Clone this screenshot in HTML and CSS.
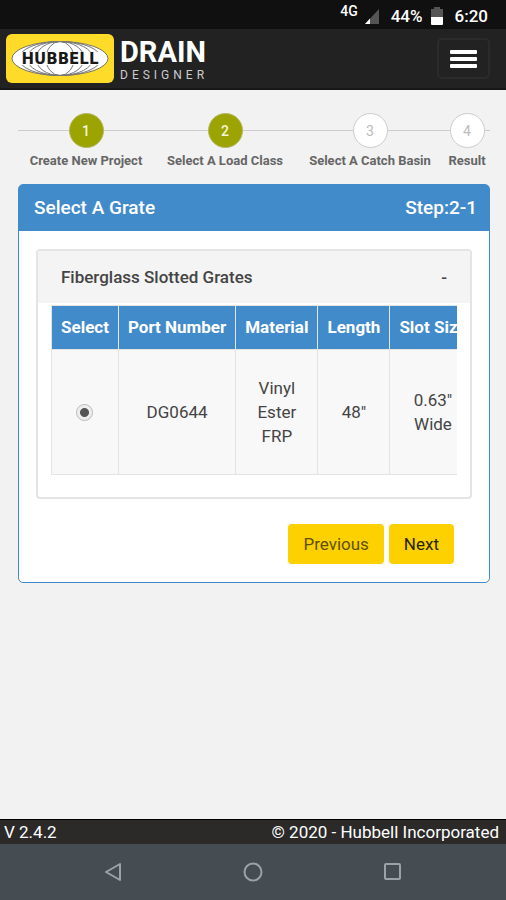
FILE: index.html
```html
<!DOCTYPE html>
<html lang="en">
<head>
<meta charset="utf-8">
<meta name="viewport" content="width=device-width, initial-scale=1">
<title>Hubbell Drain Designer</title>
<link rel="stylesheet" href="styles.css">
</head>
<body>
<div class="status">
  <span class="network">4G</span>
  <svg class="signal" width="14" height="15" viewBox="0 0 14 15" aria-hidden="true"><path d="M14 0V15H0z" fill="#555"/><path d="M5 9.6V15H0z" fill="#fff"/></svg>
  <span class="charge">44%</span>
  <svg class="battery" width="12" height="18" viewBox="0 0 12 18" aria-hidden="true"><path d="M3 0h6v2h3v8H0V2h3z" fill="#555"/><path d="M0 10h12v7a1 1 0 0 1-1 1H1a1 1 0 0 1-1-1z" fill="#fff"/></svg>
  <span>6:20</span>
</div>
<header class="navbar">
  <a class="brand" href="#">
    <svg width="108" height="49" viewBox="0 0 108 49" role="img" aria-label="Hubbell">
      <rect width="108" height="49" rx="6" fill="#fedb28"/>
      <ellipse cx="54" cy="24.5" rx="48" ry="17" fill="#fff" stroke="#77745f"/>
      <g fill="none" stroke="#777" stroke-width="1">
        <ellipse cx="54" cy="24.5" rx="41" ry="17"/>
        <ellipse cx="54" cy="24.5" rx="33" ry="17"/>
        <ellipse cx="54" cy="24.5" rx="24" ry="17"/>
        <ellipse cx="54" cy="24.5" rx="14" ry="17"/>
      </g>
      <rect x="12" y="18" width="84" height="13" fill="#fff"/>
      <text class="globe-text" x="54" y="30" text-anchor="middle">HUBBELL</text>
    </svg>
    <span class="product"><span class="drain">DRAIN</span><span class="designer">DESIGNER</span></span>
  </a>
  <button class="menu" type="button" aria-label="Menu"><span></span><span></span><span></span></button>
</header>
<main>
  <ol class="steps">
    <li class="step done"><span class="dot">1</span><span>Create New Project</span></li>
    <li class="step done"><span class="dot">2</span><span>Select A Load Class</span></li>
    <li class="step"><span class="dot">3</span><span>Select A Catch Basin</span></li>
    <li class="step"><span class="dot">4</span><span>Result</span></li>
  </ol>
  <section class="panel">
    <div class="panel-head"><h1>Select A Grate</h1><span>Step:2-1</span></div>
    <div class="panel-body">
      <div class="card">
        <button class="card-head" type="button" aria-expanded="true"><span>Fiberglass Slotted Grates</span><span>-</span></button>
        <div class="scroller">
          <table>
            <thead><tr><th>Select</th><th>Port Number</th><th>Material</th><th>Length</th><th>Slot Size</th></tr></thead>
            <tbody><tr>
              <td><input type="radio" name="grate" aria-label="DG0644" checked></td>
              <td>DG0644</td>
              <td>Vinyl Ester FRP</td>
              <td>48"</td>
              <td>0.63" Wide</td>
            </tr></tbody>
          </table>
        </div>
      </div>
      <div class="actions">
        <button class="btn previous" type="button">Previous</button>
        <button class="btn" type="button">Next</button>
      </div>
    </div>
  </section>
</main>
<footer class="footer"><span>V 2.4.2</span><span>© 2020 - Hubbell Incorporated</span></footer>
<nav class="system">
  <button type="button" aria-label="Back"><svg width="20" height="20" viewBox="0 0 20 20"><path d="M17 2V18L3 10z"/></svg></button>
  <button type="button" aria-label="Home"><svg width="20" height="20" viewBox="0 0 20 20"><circle cx="10" cy="10" r="8.5"/></svg></button>
  <button type="button" aria-label="Recent apps"><svg width="20" height="20" viewBox="0 0 20 20"><rect x="2" y="2" width="15" height="15" rx="1"/></svg></button>
</nav>
</body>
</html>
```
FILE: styles.css
```css
* { box-sizing: border-box; }
body {
  margin: 0;
  min-height: 100vh;
  display: flex;
  flex-direction: column;
  background: #f2f2f2;
  color: #444;
  font: 17px/24px Roboto, "Liberation Sans", sans-serif;
}
button { font: inherit; color: inherit; border: 0; background: none; cursor: pointer; }

.status {
  display: flex;
  justify-content: flex-end;
  align-items: center;
  height: 29px;
  padding: 3px 18px 0 0;
  background: #101010;
  color: #fff;
  font-weight: 500;
}
.network { font-size: 14px; line-height: 16px; align-self: flex-start; }
.signal { margin-left: 7px; }
.charge { margin-left: 12px; }
.battery { margin: 0 12px 0 8px; }

.navbar {
  display: flex;
  justify-content: space-between;
  align-items: center;
  height: 61px;
  padding: 0 16px 0 6px;
  background: #222;
  border-bottom: 2px solid #181818;
}
.brand { display: flex; align-items: center; gap: 6px; color: #fff; text-decoration: none; }
.globe-text { font: bold 15px "DejaVu Sans", sans-serif; fill: #191919; }
.product { display: flex; flex-direction: column; }
.drain { font-size: 29px; line-height: 32px; font-weight: 700; }
.designer { font-size: 12px; line-height: 14px; letter-spacing: 4px; color: #ccc; }
.menu {
  display: flex;
  flex-direction: column;
  align-items: center;
  justify-content: center;
  gap: 3px;
  width: 53px;
  height: 41px;
  border: 2px solid #2b2b2b;
  border-radius: 5px;
}
.menu span { width: 27px; height: 4px; border-radius: 1px; background: #fff; }

main { flex: 1; padding: 23px 16px 20px 18px; }
.steps {
  display: grid;
  grid-template-columns: 136fr 142fr 148fr 46fr;
  margin: 0 0 15px;
  padding: 0;
  list-style: none;
  background: linear-gradient(#ccc, #ccc) 0 17px / 100% 1px no-repeat;
  font-size: 13px;
  line-height: 16px;
  font-weight: 700;
  color: #666;
  white-space: nowrap;
}
.step { display: flex; flex-direction: column; align-items: center; gap: 5px; }
.dot {
  width: 35px;
  height: 35px;
  border: 1px solid #ccc;
  border-radius: 50%;
  background: #fff;
  color: #bbb;
  font-size: 14px;
  line-height: 34px;
  font-weight: 400;
  text-align: center;
}
.done .dot { background: #9ba400; border-color: #b4b85e; color: #f5f5dc; font-weight: 500; }

.panel { border: 1px solid #428bca; border-radius: 5px; background: #fff; }
.panel-head {
  display: flex;
  justify-content: space-between;
  padding: 11px 12px 11px 15px;
  border-radius: 3px 3px 0 0;
  background: #428bca;
  color: #fff;
  font-size: 19px;
  font-weight: 500;
}
.panel-head h1 { margin: 0; font: inherit; }
.panel-body { padding: 18px 17px; }
.card { border: 2px solid #e4e4e4; border-radius: 4px; }
.card-head {
  display: flex;
  justify-content: space-between;
  width: 100%;
  padding: 14px 23px;
  background: #f4f4f4;
  font-weight: 500;
}
.scroller { margin: 2px 13px 22px; overflow-x: auto; scrollbar-width: none; }
table { width: 100%; border-collapse: collapse; text-align: center; }
th, td { border: 1px solid #e4e4e4; }
th { padding: 9px 9px 10px; background: #428bca; color: #fff; white-space: nowrap; font-weight: 700; }
td { padding: 26px 20px; background: #f8f8f8; }
input[type="radio"] {
  appearance: none;
  display: block;
  width: 17px;
  height: 17px;
  margin: 0 auto;
  border: 1px solid #bbb;
  border-radius: 50%;
  background: radial-gradient(circle, #555 4px, #eee 5px);
}
.actions { display: flex; justify-content: flex-end; gap: 5px; padding: 25px 18px 0 0; }
.btn { padding: 8px 15px; border-radius: 4px; background: #fdd000; color: #272300; }
.previous { color: #5f5000; }

.footer {
  display: flex;
  justify-content: space-between;
  padding: 1px 7px 0 4px;
  border-top: 1px solid #000;
  background: #2b2a29;
  color: #fff;
}
.footer span { line-height: 23px; }
.system { display: flex; justify-content: center; gap: 100px; padding: 8px 0; background: #454d52; }
.system button { display: grid; place-items: center; width: 40px; height: 40px; padding: 0; }
.system svg { fill: none; stroke: #9ba3a7; stroke-width: 2; stroke-linejoin: round; }
```
